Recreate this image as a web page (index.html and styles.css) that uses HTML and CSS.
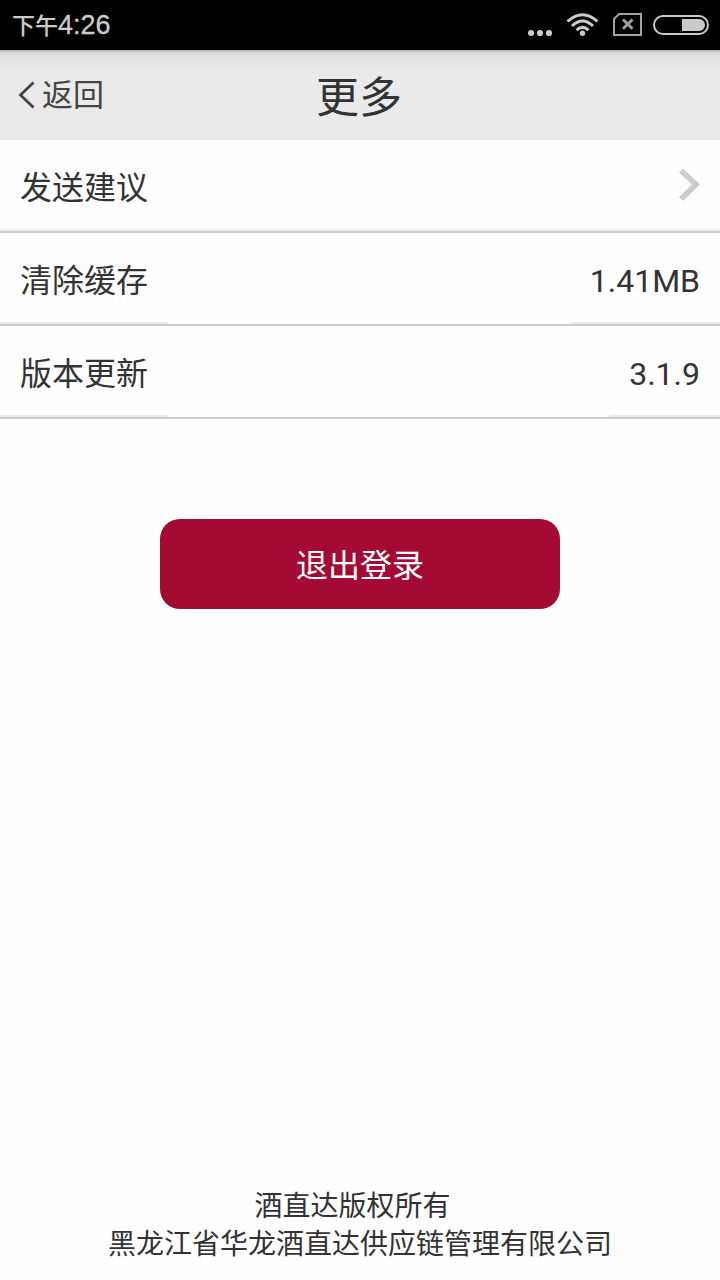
FILE: index.html
```html
<!DOCTYPE html>
<html lang="zh-CN">
<head>
    <meta charset="UTF-8">
    <meta name="viewport" content="width=device-width, initial-scale=1.0">
    <title>更多</title>
    <link rel="stylesheet" href="styles.css">
</head>
<body>

<div class="status-bar">
    <div class="time"><span class="period">下午</span><span class="clock">4:26</span></div>
    <!-- 信号、WiFi、SIM卡、电池 -->
    <svg class="status-icons" width="192" height="50" viewBox="0 0 192 50">
        <g fill="#cbcbcb">
            <circle cx="3" cy="33" r="3.1"/>
            <circle cx="12" cy="33" r="3.1"/>
            <circle cx="21" cy="33" r="3.1"/>
            <circle cx="54.500" cy="33.200" r="2.700"/>
        </g>
        <g fill="none" stroke="#cbcbcb" stroke-width="3">
            <path d="M39.500 21.500Q54.500 8 69.500 21.500"/>
            <path d="M44 26Q54.500 16 65 26"/>
            <path d="M48.500 30.200Q54.500 24.600 60.500 30.200"/>
        </g>
        <path d="M91 14H113V35H86V19Z" fill="none" stroke="#a3a3a3" stroke-width="2"/>
        <path d="M95 19.500L104.500 28.800M104.500 19.500L95 28.800" stroke="#a3a3a3" stroke-width="2.800"/>
        <rect x="126" y="16" width="54" height="18" rx="9" fill="none" stroke="#cbcbcb" stroke-width="2"/>
        <path d="M154 19H171A6 6 0 0 1 171 31H154Z" fill="#cbcbcb"/>
    </svg>
</div>

<div class="header">
    <a class="back">
        <svg width="17" height="28" viewBox="0 0 17 28"><path d="M15.500 1.500L2.500 14L15.500 26.500" fill="none" stroke="#444" stroke-width="2.800"/></svg>
        <span>返回</span>
    </a>
    <h1 class="title">更多</h1>
</div>

<div class="list">
    <div class="row full">
        <span class="label">发送建议</span>
        <span class="arrow">
            <svg width="21" height="32" viewBox="0 0 21 32"><path d="M2 1.500L17 15.500L2 30" fill="none" stroke="#ccc" stroke-width="5.500"/></svg>
        </span>
    </div>
    <div class="row">
        <span class="label">清除缓存</span>
        <span class="value">1.41MB</span>
    </div>
    <div class="row">
        <span class="label">版本更新</span>
        <span class="value">3.1.9</span>
    </div>
</div>

<button class="logout">退出登录</button>

<div class="footer">
    <p class="copyright">酒直达版权所有</p>
    <p>黑龙江省华龙酒直达供应链管理有限公司</p>
</div>

</body>
</html>
```

FILE: styles.css
```css
* {
    box-sizing: border-box;
}
body {
    display: flex;
    flex-direction: column;
    height: 1280px;
    margin: 0;
    background-color: #fefefe;
    color: #333;
    font-family: Roboto, "Noto Sans CJK SC", sans-serif;
    font-size: 32px;
}
svg {
    display: block;
}
/* 状态栏 */
.status-bar {
    display: flex;
    justify-content: space-between;
    height: 50px;
    padding-left: 12px;
    background-color: #000;
    color: #cbcbcb;
}
.time {
    display: flex;
    align-items: baseline;
    line-height: 50px;
}
.period {
    font-size: 23px;
    font-weight: 500;
}
.clock {
    font-family: "Liberation Sans", sans-serif;
    font-size: 27px;
    -webkit-text-stroke: 0.3px #cbcbcb;
}
/* 标题栏 */
.header {
    display: grid;
    grid-template-columns: 1fr auto 1fr;
    align-items: center;
    height: 90px;
    background: linear-gradient(#a8a8a8 0, #d8d8d8 2px, #e1e1e1 5px, #e9e9e9 22px, #eaeaea 30px);
}
.back {
    display: flex;
    align-items: center;
    gap: 7px;
    padding-left: 18px;
    color: #444;
    font-size: 31px;
    line-height: 44px;
}
.back span {
    padding-top: 2px;
}
.title {
    margin: 0;
    padding: 7px 2px 0 0;
    font-size: 43px;
    font-weight: 400;
    line-height: 83px;
}
/* 列表 */
.row {
    display: flex;
    justify-content: space-between;
    height: 93px;
    border-bottom: 2px solid #ccc;
}
.label, .value {
    padding: 5px 20px 0;
    border-bottom: 2px solid #ebebeb;
    line-height: 86px;
}
.full .label {
    flex: 1;
}
.arrow {
    display: flex;
    align-items: center;
    padding-right: 20px;
    border-bottom: 2px solid #ebebeb;
}
.logout {
    align-self: center;
    width: 400px;
    height: 90px;
    margin-top: 100px;
    padding: 0 0 2px;
    border: none;
    border-radius: 20px;
    background-color: #a40a33;
    color: #fff;
    font: inherit;
}
/* 版权信息 */
.footer {
    margin-top: auto;
    padding-bottom: 16px;
    font-size: 28px;
    line-height: 38px;
    text-align: center;
}
.footer p {
    margin: 0;
}
.footer .copyright {
    padding-right: 15px;
}
```
